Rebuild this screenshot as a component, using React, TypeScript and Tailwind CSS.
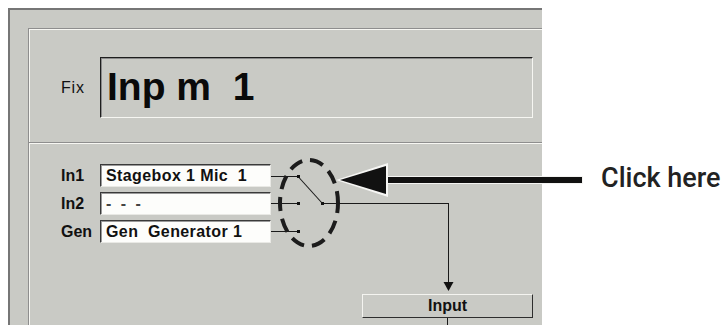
import React from "react";

const sunkenBox =
  "bg-[#fdfdfb] border-t border-l border-t-[#3a3a3a] border-l-[#3a3a3a] border-b border-r border-b-[#e9e9e5] border-r-[#e9e9e5] shadow-[inset_1px_1px_0_#9a9a9a]";

function InputRow({ label, value, light }: { label: string; value: string; light?: boolean }) {
  return (
    <div className="flex items-center h-[23px]">
      <div className="w-[39px] text-[16px] font-bold leading-none text-[#111]">{label}</div>
      <div className={`w-[171px] h-[23px] flex items-center pl-[5px] ${sunkenBox}`}>
        <span
          className={`whitespace-pre text-[16px] leading-none ${
            light ? "font-bold text-[#444] tracking-[2.5px]" : "font-bold text-[#111] tracking-[0.4px]"
          }`}
        >
          {value}
        </span>
      </div>
    </div>
  );
}

export default function App() {
  return (
    <div className="relative w-[724px] h-[325px] overflow-hidden bg-white flex font-['Liberation_Sans',Arial,sans-serif]">
      {/* Window panel */}
      <div className="mt-[8px] ml-[8px] w-[534px] h-[340px] shrink-0 bg-[#c9cac5] border-t-2 border-l-2 border-[#767676] pt-[18px] pl-[18px]">
        <div className="h-full border-t border-l border-[#8e8e8e] shadow-[inset_1px_1px_0_#f7f7f3]">
          {/* Top: Fix */}
          <div className="h-[113px] pt-[28px] pl-[32px]">
            <div className="flex items-center h-[61px]">
              <div className="w-[39px] text-[16px] tracking-[0.8px] text-[#111] leading-none">Fix</div>
              <div className="w-[433px] h-[61px] flex items-center pl-[6px] border-t border-l border-[#1e1e1e] border-b border-r border-b-[#f6f6f2] border-r-[#f6f6f2] shadow-[inset_1px_1px_0_#8a8a8a]">
                <span className="whitespace-pre text-[39px] font-bold leading-none text-[#0a0a0a] mb-[2px]">
                  Inp m  1
                </span>
              </div>
            </div>
          </div>
          {/* Separator */}
          <div className="h-0 border-t border-[#8e8e8e] border-b border-b-[#f7f7f3]" />
          {/* Bottom: inputs */}
          <div className="pt-[20px] pl-[32px]">
            <div className="flex flex-col gap-[5px]">
              <InputRow label="In1" value="Stagebox 1 Mic  1" />
              <InputRow label="In2" value="- - -" light />
              <InputRow label="Gen" value="Gen  Generator 1" />
            </div>
            <div className="mt-[51px] ml-[301px] w-[171px] h-[24px] flex items-center justify-center border-t border-l border-[#f4f4f0] border-b border-r border-b-[#2e2e2e] border-r-[#2e2e2e]">
              <span className="text-[16px] font-bold leading-none text-[#111]">Input</span>
            </div>
          </div>
        </div>
      </div>

      {/* Caption */}
      <div className="flex-1 pl-[59px] pt-[162px]">
        <div className="font-['Roboto',Arial,sans-serif] font-medium text-[27px] leading-[32px] text-[#222] whitespace-nowrap">
          Click here
        </div>
      </div>

      {/* Wiring + annotation overlay */}
      <svg
        className="absolute inset-0 pointer-events-none"
        width="724"
        height="325"
        viewBox="0 0 724 325"
      >
        <g stroke="#1a1a1a" strokeWidth="1" fill="none" shapeRendering="crispEdges">
          <line x1="271" y1="176.5" x2="298" y2="176.5" />
          <line x1="271" y1="203.5" x2="298" y2="203.5" />
          <line x1="271" y1="231.5" x2="298" y2="231.5" />
          <line x1="322" y1="203.5" x2="448" y2="203.5" />
          <line x1="448.5" y1="203" x2="448.5" y2="284" />
          <line x1="447.5" y1="318" x2="447.5" y2="325" />
        </g>
        <line x1="298.5" y1="177" x2="322" y2="203" stroke="#1a1a1a" strokeWidth="1.1" />
        <g fill="#111">
          <rect x="297" y="175" width="3" height="3" />
          <rect x="297" y="202" width="3" height="3" />
          <rect x="297" y="230" width="3" height="3" />
          <rect x="321" y="202" width="3" height="3" />
          <polygon points="443.5,282 453.5,282 448.5,291" />
        </g>
        {/* dashed ellipse */}
        <ellipse
          cx="309"
          cy="203"
          rx="29"
          ry="43"
          fill="none"
          stroke="#1c1c1c"
          strokeWidth="4"
          strokeDasharray="14 8"
          strokeDashoffset="4"
        />
        {/* arrow */}
        <rect x="386" y="176" width="197" height="8" fill="#f4f4f2" />
        <rect x="386" y="177" width="196" height="6" fill="#111" />
        <polygon points="336,180 388,163 388,197" fill="#f6f6f4" />
        <polygon points="340,180 386,166 386,194" fill="#111" />
      </svg>
    </div>
  );
}
